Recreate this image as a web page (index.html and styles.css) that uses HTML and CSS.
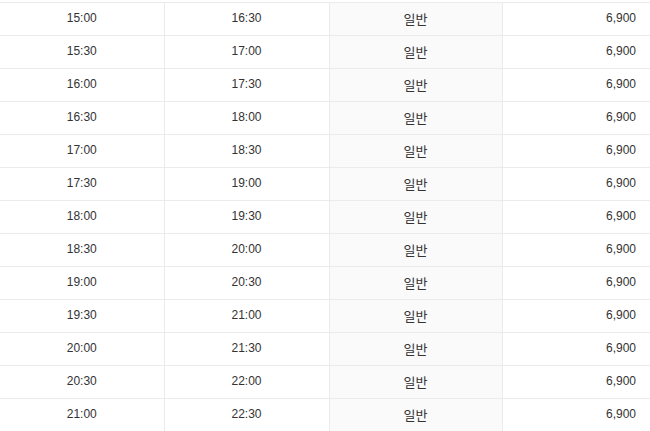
FILE: index.html
```html
<!DOCTYPE html>
<html lang="ko">
<head>
<meta charset="utf-8">
<title>시간표</title>
<link rel="stylesheet" href="styles.css">
</head>
<body>
<table class="fare-table">
  <colgroup>
    <col class="c-dep"><col class="c-arr"><col class="c-type"><col class="c-fare">
  </colgroup>
  <tbody>
    <tr><td>15:00</td><td>16:30</td><td class="type">일반</td><td class="fare">6,900</td></tr>
    <tr><td>15:30</td><td>17:00</td><td class="type">일반</td><td class="fare">6,900</td></tr>
    <tr><td>16:00</td><td>17:30</td><td class="type">일반</td><td class="fare">6,900</td></tr>
    <tr><td>16:30</td><td>18:00</td><td class="type">일반</td><td class="fare">6,900</td></tr>
    <tr><td>17:00</td><td>18:30</td><td class="type">일반</td><td class="fare">6,900</td></tr>
    <tr><td>17:30</td><td>19:00</td><td class="type">일반</td><td class="fare">6,900</td></tr>
    <tr><td>18:00</td><td>19:30</td><td class="type">일반</td><td class="fare">6,900</td></tr>
    <tr><td>18:30</td><td>20:00</td><td class="type">일반</td><td class="fare">6,900</td></tr>
    <tr><td>19:00</td><td>20:30</td><td class="type">일반</td><td class="fare">6,900</td></tr>
    <tr><td>19:30</td><td>21:00</td><td class="type">일반</td><td class="fare">6,900</td></tr>
    <tr><td>20:00</td><td>21:30</td><td class="type">일반</td><td class="fare">6,900</td></tr>
    <tr><td>20:30</td><td>22:00</td><td class="type">일반</td><td class="fare">6,900</td></tr>
    <tr><td>21:00</td><td>22:30</td><td class="type">일반</td><td class="fare">6,900</td></tr>
  </tbody>
</table>
</body>
</html>
```

FILE: styles.css
```css
html, body {
  margin: 0;
  padding: 0;
  background: #fff;
}
body {
  overflow: hidden;
  font-family: "Liberation Sans", "Noto Sans CJK KR", sans-serif;
  font-size: 12px;
  color: #333;
}
.fare-table {
  width: 650px;
  margin-top: 2px;
  border-collapse: collapse;
  table-layout: fixed;
}
.c-dep { width: 164px; }
.c-arr { width: 165px; }
.c-type { width: 173px; }
.c-fare { width: 148px; }
.fare-table td {
  height: 30px;
  padding: 0 0 2px 0;
  text-align: center;
  vertical-align: middle;
  border-top: 1px solid #ebebeb;
  border-left: 1px solid #ebebeb;
}
.fare-table td:first-child {
  border-left: none;
}
.fare-table td.type {
  background: #fafafa;
  font-size: 13px;
}
.fare-table td.fare {
  text-align: right;
  padding-right: 14px;
}
```
